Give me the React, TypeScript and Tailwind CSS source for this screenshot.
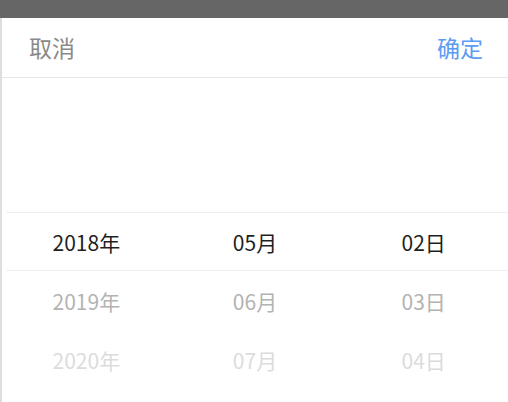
import React from "react";

const font = { fontFamily: '"Noto Sans CJK SC", "Noto Sans", sans-serif' };

const cols = [
  ["2018年", "2019年", "2020年"],
  ["05月", "06月", "07月"],
  ["02日", "03日", "04日"],
];

const colors = ["text-[#1f1f1f]", "text-[#b3b3b3]", "text-[#dcdcdc]"];

export default function App() {
  return (
    <div className="w-[508px] h-[402px] bg-white overflow-hidden flex flex-col" style={font}>
      <div className="h-[18px] bg-[#666666] shrink-0" />
      <div className="flex-1 border-l-2 border-[#dedede] flex flex-col">
        <div className="h-[60px] shrink-0 flex items-center justify-between pl-[27px] pr-[25px] border-b border-[#e6e6e6]">
          <span className="text-[23px] text-[#8a8a8a]">取消</span>
          <span className="text-[23px] text-[#5b9bf4]">确定</span>
        </div>
        <div className="relative flex-1">
          <div className="absolute left-[4px] right-0 top-[134px] h-px bg-[#efefef]" />
          <div className="absolute left-[4px] right-0 top-[192px] h-px bg-[#efefef]" />
          <div className="grid grid-cols-3 pt-[135px]">
            {cols.map((col, ci) => (
              <div key={ci} className="flex flex-col items-center">
                {col.map((t, ri) => (
                  <div key={ri} className={`h-[59px] flex items-center text-[21px] ${colors[ri]}`}>
                    {t}
                  </div>
                ))}
              </div>
            ))}
          </div>
        </div>
      </div>
    </div>
  );
}
